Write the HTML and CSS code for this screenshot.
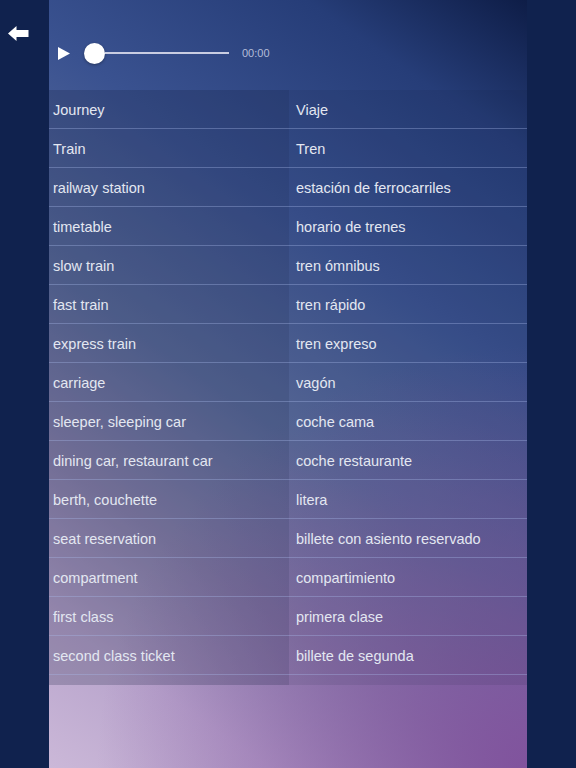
FILE: index.html
```html
<!DOCTYPE html>
<html lang="en">
<head>
    <meta charset="UTF-8">
    <meta name="viewport" content="width=device-width, initial-scale=1.0">
    <title>Vocabulary - Train</title>
    <link rel="stylesheet" href="styles.css">
</head>
<body>
    <aside class="sidebar">
        <button class="back-btn" aria-label="Back">
            <svg width="21" height="15" viewBox="0 0 21 15">
                <polygon points="0,7.5 8.5,0 8.5,4 20.5,4 20.5,11 8.5,11 8.5,15" fill="#ffffff"/>
            </svg>
        </button>
    </aside>

    <main class="panel">
        <div class="player">
            <svg class="play" width="12" height="13" viewBox="0 0 12 13">
                <polygon points="0,0 12,6.5 0,13" fill="#ffffff"/>
            </svg>
            <div class="track">
                <div class="knob"></div>
                <div class="line"></div>
            </div>
            <span class="time">00:00</span>
        </div>

        <div class="words">
            <div class="cell en">Journey</div><div class="cell es">Viaje</div>
            <div class="cell en">Train</div><div class="cell es">Tren</div>
            <div class="cell en">railway station</div><div class="cell es">estación de ferrocarriles</div>
            <div class="cell en">timetable</div><div class="cell es">horario de trenes</div>
            <div class="cell en">slow train</div><div class="cell es">tren ómnibus</div>
            <div class="cell en">fast train</div><div class="cell es">tren rápido</div>
            <div class="cell en">express train</div><div class="cell es">tren expreso</div>
            <div class="cell en">carriage</div><div class="cell es">vagón</div>
            <div class="cell en">sleeper, sleeping car</div><div class="cell es">coche cama</div>
            <div class="cell en">dining car, restaurant car</div><div class="cell es">coche restaurante</div>
            <div class="cell en">berth, couchette</div><div class="cell es">litera</div>
            <div class="cell en">seat reservation</div><div class="cell es">billete con asiento reservado</div>
            <div class="cell en">compartment</div><div class="cell es">compartimiento</div>
            <div class="cell en">first class</div><div class="cell es">primera clase</div>
            <div class="cell en">second class ticket</div><div class="cell es">billete de segunda</div>
            <div class="cell en partial"></div><div class="cell es partial"></div>
        </div>
    </main>

    <div class="gutter"></div>
</body>
</html>
```

FILE: styles.css
```css
body {
    margin: 0;
    padding: 0;
    height: 768px;
    overflow: hidden;
    display: flex;
    background-color: #10224e;
    font-family: "Liberation Sans", Arial, sans-serif;
}

.sidebar {
    width: 49px;
    flex-shrink: 0;
    background-color: #10224e;
}

.back-btn {
    display: block;
    margin: 26px 0 0 8px;
    padding: 0;
    border: none;
    background: none;
    cursor: pointer;
}

.gutter {
    width: 49px;
    flex-shrink: 0;
    background-color: #10224e;
}

.panel {
    width: 478px;
    flex-shrink: 0;
    height: 768px;
    background:
        radial-gradient(ellipse 90% 55% at 100% 100%, rgba(128, 80, 156, 0.95), rgba(128, 80, 156, 0) 100%),
        linear-gradient(215deg, #0e1d47 0%, #263d78 14%, #3a5290 34%, #5d6e9e 55%, #8e86b0 72%, #b8a4cc 86%, #cbb8d8 100%);
}

.player {
    height: 74px;
    padding-top: 16px;
    display: flex;
    align-items: center;
    padding-left: 9px;
}

.play {
    display: block;
}

.track {
    display: flex;
    align-items: center;
    margin-left: 14px;
}

.knob {
    width: 21px;
    height: 21px;
    border-radius: 50%;
    background: #ffffff;
    box-shadow: 0 1px 3px rgba(0, 0, 0, 0.35);
}

.line {
    width: 124px;
    height: 2px;
    background: #c9cde2;
}

.time {
    margin-left: 13px;
    font-size: 11px;
    color: #b4bcd8;
}

.words {
    display: grid;
    grid-template-columns: 240px 238px;
}

.cell {
    height: 37px;
    padding-top: 1px;
    line-height: 39px;
    border-bottom: 1px solid rgba(170, 185, 235, 0.35);
    font-size: 14.5px;
    color: #e3e7f1;
    white-space: nowrap;
}

.en {
    padding-left: 4px;
    background: rgba(20, 28, 60, 0.22);
}

.es {
    padding-left: 7px;
    background: rgba(20, 28, 60, 0.1);
}

.partial {
    height: 10px;
    padding-top: 0;
    border-bottom: none;
}
```
